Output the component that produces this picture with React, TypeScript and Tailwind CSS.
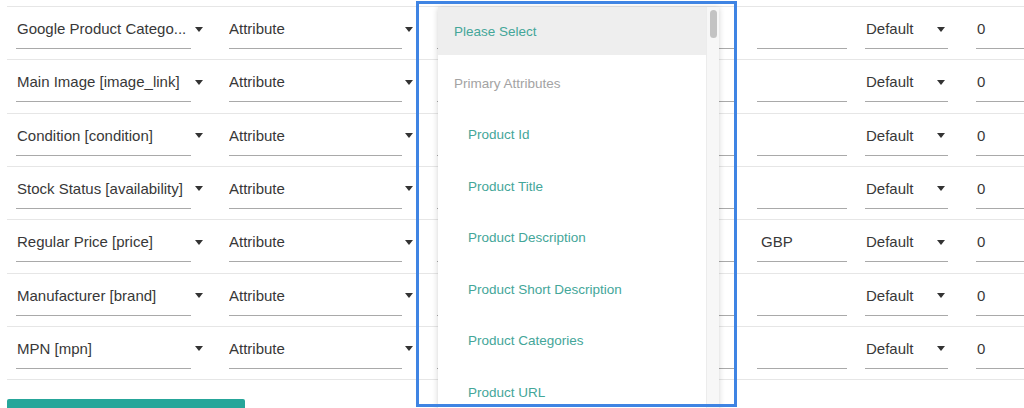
import React from "react";

interface MappingRow {
  field: string;
  suffix: string;
}

const rows: MappingRow[] = [
  { field: "Google Product Catego...", suffix: "" },
  { field: "Main Image [image_link]", suffix: "" },
  { field: "Condition [condition]", suffix: "" },
  { field: "Stock Status [availability]", suffix: "" },
  { field: "Regular Price [price]", suffix: "GBP" },
  { field: "Manufacturer [brand]", suffix: "" },
  { field: "MPN [mpn]", suffix: "" },
];

const options = [
  "Product Id",
  "Product Title",
  "Product Description",
  "Product Short Description",
  "Product Categories",
  "Product URL",
];

function Caret() {
  return (
    <svg width="8" height="5" viewBox="0 0 8 5" className="block">
      <polygon points="0,0 8,0 4,5" fill="#333" />
    </svg>
  );
}

function Field({ className, children }: { className: string; children?: React.ReactNode }) {
  return (
    <div
      className={`mt-[10px] h-[32px] pt-[1px] border-b border-[#a9a9a9] text-[15px] leading-[22px] text-[#383838] whitespace-nowrap overflow-hidden ${className}`}
    >
      {children}
    </div>
  );
}

function CaretSlot({ className }: { className: string }) {
  return (
    <div className={`mt-[11px] h-[22px] flex items-center ${className}`}>
      <Caret />
    </div>
  );
}

export default function App() {
  return (
    <div
      className="relative h-[408px] w-[1024px] overflow-hidden bg-white"
      style={{ fontFamily: '"Liberation Sans", Arial, sans-serif' }}
    >
      {/* Mapping table */}
      <div className="ml-[7px] mt-[6px] border-t border-[#e6e6e6]">
        {rows.map((row) => (
          <div key={row.field} className="flex items-start h-[53.33px] border-b border-[#e6e6e6]">
            <div className="w-[9px] shrink-0" />
            <Field className="w-[175px] shrink-0 pl-[1px]">{row.field}</Field>
            <div className="w-[38px] shrink-0">
              <CaretSlot className="pl-[4px]" />
            </div>
            <Field className="w-[173px] shrink-0">Attribute</Field>
            <div className="w-[35px] shrink-0">
              <CaretSlot className="pl-[3px]" />
            </div>
            <Field className="w-[300px] shrink-0" />
            <div className="w-[20px] shrink-0" />
            <Field className="w-[90px] shrink-0 pl-[4px]">{row.suffix}</Field>
            <div className="w-[18px] shrink-0" />
            <Field className="w-[83px] shrink-0 pl-[1px] pr-[3px] flex justify-between">
              <span>Default</span>
              <span className="flex items-center h-[22px]">
                <Caret />
              </span>
            </Field>
            <div className="w-[28px] shrink-0" />
            <Field className="flex-1 pl-[1px]">0</Field>
          </div>
        ))}
      </div>

      <div className="ml-[7px] mt-[19px] w-[238px] h-[36px] rounded-[2px] bg-[#26a69a]" />

      {/* Open attribute dropdown */}
      <div className="absolute left-[438px] top-[7px] w-[281px] h-[420px] bg-white shadow-[0_1px_6px_rgba(0,0,0,0.18)] flex">
        <div className="flex-1 text-[13.5px] leading-[20px]">
          <div className="h-[48px] pt-[1px] bg-[#eeeeee] flex items-center pl-[16px] text-[#44a699]">
            Please Select
          </div>
          <div className="h-[3px]" />
          <div className="h-[51.5px] flex items-center pl-[16px] text-[#a3a3a3]">
            Primary Attributes
          </div>
          {options.map((opt) => (
            <div key={opt} className="h-[51.5px] flex items-center pl-[30px] text-[#44a699]">
              {opt}
            </div>
          ))}
        </div>
        <div className="w-[13px] bg-[#f7f7f7] border-l border-[#ececec] pt-[3px] flex justify-center">
          <div className="w-[7px] h-[28px] rounded-full bg-[#c3c3c3]" />
        </div>
      </div>

      {/* Highlight frame */}
      <div className="absolute left-[416px] top-[1px] w-[321px] h-[406px] border-[3px] border-[#3f84e3] pointer-events-none" />
    </div>
  );
}
